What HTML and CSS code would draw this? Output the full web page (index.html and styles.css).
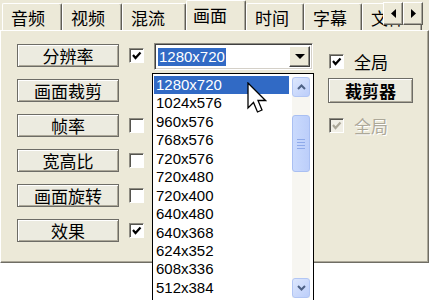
FILE: index.html
```html
<!DOCTYPE html>
<html lang="zh-CN">
<head>
    <meta charset="UTF-8">
    <title>画面设置</title>
    <link rel="stylesheet" href="styles.css">
</head>
<body>
    <div class="window">
        <!-- Tab strip -->
        <div class="tabstrip">
            <div class="tab">音频</div>
            <div class="tab">视频</div>
            <div class="tab tab-before-active">混流</div>
            <div class="tab active">画面</div>
            <div class="tab tab-after-active">时间</div>
            <div class="tab tab-after-active">字幕</div>
            <div class="tab">文件</div>
            <div class="tab-scroll">
                <div class="scroll-btn">
                    <svg width="5" height="9" viewBox="0 0 5 9"><path d="M5 0 L0 4.5 L5 9 Z" fill="#000"/></svg>
                </div>
                <div class="scroll-btn">
                    <svg width="5" height="9" viewBox="0 0 5 9"><path d="M0 0 L5 4.5 L0 9 Z" fill="#000"/></svg>
                </div>
            </div>
        </div>

        <!-- Video page -->
        <div class="panel">
            <div class="btn btn-left">分辨率</div>
            <div class="check checked col-check">
                <svg viewBox="0 0 11 11"><path d="M2 5 L4.5 8 L9.5 2.5" fill="none" stroke="#000" stroke-width="2.2"/></svg>
            </div>
            <div class="combo col-combo">
                <span class="combo-value">1280x720</span>
                <div class="combo-btn">
                    <svg width="10" height="5" viewBox="0 0 10 5"><path d="M0 0 L10 0 L5 5 Z" fill="#000"/></svg>
                </div>
                <div class="dropdown">
                    <div class="options">
                        <div class="option selected">1280x720</div>
                        <div class="option">1024x576</div>
                        <div class="option">960x576</div>
                        <div class="option">768x576</div>
                        <div class="option">720x576</div>
                        <div class="option">720x480</div>
                        <div class="option">720x400</div>
                        <div class="option">640x480</div>
                        <div class="option">640x368</div>
                        <div class="option">624x352</div>
                        <div class="option">608x336</div>
                        <div class="option">512x384</div>
                    </div>
                    <div class="scrollbar">
                        <div class="sb-btn">
                            <svg width="9" height="6" viewBox="0 0 9 6"><path d="M1 5 L4.5 1.5 L8 5" fill="none" stroke="#4d6185" stroke-width="2"/></svg>
                        </div>
                        <div class="sb-thumb">
                            <span></span><span></span><span></span><span></span>
                        </div>
                        <div class="sb-track"></div>
                        <div class="sb-btn">
                            <svg width="9" height="6" viewBox="0 0 9 6"><path d="M1 1 L4.5 4.5 L8 1" fill="none" stroke="#4d6185" stroke-width="2"/></svg>
                        </div>
                    </div>
                </div>
            </div>
            <label class="side-check col-side">
                <span class="check checked">
                    <svg viewBox="0 0 11 11"><path d="M2 5 L4.5 8 L9.5 2.5" fill="none" stroke="#000" stroke-width="2.2"/></svg>
                </span>
                全局
            </label>

            <div class="btn btn-left">画面裁剪</div>
            <div class="btn btn-crop col-side">裁剪器</div>

            <div class="btn btn-left">帧率</div>
            <div class="check col-check"></div>
            <label class="side-check disabled col-side">
                <span class="check checked">
                    <svg viewBox="0 0 11 11"><path d="M2 5 L4.5 8 L9.5 2.5" fill="none" stroke="#aca899" stroke-width="2.2"/></svg>
                </span>
                全局
            </label>

            <div class="btn btn-left">宽高比</div>
            <div class="check col-check"></div>

            <div class="btn btn-left">画面旋转</div>
            <div class="check col-check"></div>

            <div class="btn btn-left">效果</div>
            <div class="check checked col-check">
                <svg viewBox="0 0 11 11"><path d="M2 5 L4.5 8 L9.5 2.5" fill="none" stroke="#000" stroke-width="2.2"/></svg>
            </div>

            <!-- mouse pointer over the open list -->
            <svg class="cursor" width="20" height="32" viewBox="0 0 20 32">
                <path d="M1 1 L1 26 L6.5 20.5 L10.5 30 L15 28 L11 18.5 L18.5 18.5 Z" fill="#fff" stroke="#000" stroke-width="1.3" stroke-linejoin="miter"/>
            </svg>
        </div>
    </div>
</body>
</html>
```

FILE: styles.css
```css
* {
    margin: 0;
    padding: 0;
    box-sizing: border-box;
}

html, body {
    width: 429px;
    height: 300px;
    overflow: hidden;
}

body {
    background: #fff;
    font-family: "Noto Sans CJK SC", sans-serif;
    font-size: 17px;
    color: #000;
}

.window {
    width: 429px;
    background: #ece9d8;
}

/* Tabs */
.tabstrip {
    position: relative;
    height: 30px;
    display: flex;
    align-items: flex-end;
    padding-left: 2px;
    overflow: hidden;
}

.tab {
    flex: none;
    width: 60px;
    height: 27px;
    line-height: 27px;
    padding-left: 8px;
    border-top: 1px solid #fff;
    border-left: 1px solid #fff;
    border-right: 1px solid #5f5d55;
    box-shadow: inset -1px 0 #a9a79c;
    border-radius: 2px 2px 0 0;
    white-space: nowrap;
}

.tab-before-active {
    width: 64px;
}

.tab-after-active {
    width: 58px;
}

.tab.active {
    position: relative;
    z-index: 1;
    height: 31px;
    line-height: 27px;
    margin-bottom: -1px;
    padding-left: 6px;
    background: #ece9d8;
}

.tab-scroll {
    position: absolute;
    top: 2px;
    left: 383px;
    display: flex;
}

.scroll-btn {
    width: 20px;
    height: 23px;
    display: flex;
    align-items: center;
    justify-content: center;
    background: #ece9d8;
    border: 1px solid;
    border-color: #fff #5f5d55 #5f5d55 #fff;
    box-shadow: inset -1px -1px #a9a79c;
}

/* Page */
.panel {
    position: relative;
    height: 233px;
    padding: 12px 0 0 16px;
    border-top: 1px solid #fff;
    border-left: 1px solid #fff;
    border-right: 1px solid #6f6d64;
    border-bottom: 1px solid #6f6d64;
    box-shadow: inset -1px -1px #aca899;
    display: grid;
    grid-template-columns: 112px 25px 174px 85px;
    grid-auto-rows: 25px;
    row-gap: 10px;
    align-items: center;
}

.btn-left { grid-column: 1; }
.col-check { grid-column: 2; }
.col-combo { grid-column: 3; }
.col-side { grid-column: 4; }

.btn {
    height: 23px;
    line-height: 21px;
    text-align: center;
    background: #ecebe0;
    border: 1px solid #6d6c66;
    box-shadow: inset 1px 1px #fff, inset -1px -1px #aca899;
    white-space: nowrap;
}

.btn-left {
    width: 102px;
}

.btn-crop {
    width: 85px;
    height: 25px;
    line-height: 23px;
    font-weight: 700;
}

/* Checkboxes */
.check {
    width: 15px;
    height: 15px;
    background: #fff;
    border: 1px solid;
    border-color: #8e8c82 #fff #fff #8e8c82;
    box-shadow: inset 1px 1px #55544e;
    display: flex;
    align-items: center;
    justify-content: center;
}

.check svg {
    width: 11px;
    height: 11px;
}

.side-check {
    display: flex;
    align-items: center;
    gap: 10px;
    padding-left: 1px;
}

.panel > .side-check:first-of-type {
    align-self: start;
    margin-top: 6px;
}

.side-check.disabled {
    color: #aca899;
    text-shadow: 1px 1px #fff;
}

.side-check.disabled .check {
    background: #f1efe6;
}

/* Combo box */
.combo {
    position: relative;
    align-self: start;
    width: 159px;
    height: 27px;
    display: flex;
    align-items: center;
    padding: 0 2px 0 3px;
    background: #fff;
    border: 1px solid;
    border-color: #8e8c82 #fff #fff #8e8c82;
    box-shadow: inset 1px 1px #404040, inset -1px -1px #d4d0c8;
    font-family: "Liberation Sans", Arial, sans-serif;
    font-size: 15px;
}

.combo-value {
    height: 18px;
    line-height: 18px;
    padding: 0 1px;
    background: #316ac5;
    color: #fff;
}

.combo-btn {
    margin-left: auto;
    width: 21px;
    height: 21px;
    display: flex;
    align-items: center;
    justify-content: center;
    background: #ece9d8;
    border: 1px solid;
    border-color: #fff #404040 #404040 #fff;
    box-shadow: inset -1px -1px #8e8c82;
}

/* Open list (runs on past the bottom of the window) */
.dropdown {
    position: absolute;
    top: 29px;
    left: -3px;
    z-index: 2;
    width: 162px;
    height: 228px;
    display: flex;
    padding: 2px 3px 0 1px;
    background: #fff;
    border: 1px solid #000;
    border-bottom: none;
}

.options {
    flex: 1;
}

.option {
    height: 18.45px;
    line-height: 18.45px;
    padding-left: 2px;
}

.option.selected {
    background: #316ac5;
    color: #fff;
}

.scrollbar {
    width: 18px;
    height: 221px;
    margin: 1px 0 0 3px;
    display: flex;
    flex-direction: column;
    background: #f7f6f1;
}

.sb-btn {
    height: 20px;
    display: flex;
    align-items: center;
    justify-content: center;
    background: linear-gradient(135deg, #dde7fd, #bccefa);
    border: 1px solid #b2c6f4;
    border-radius: 3px;
}

.sb-thumb {
    height: 57px;
    margin-top: 18px;
    display: flex;
    flex-direction: column;
    align-items: center;
    justify-content: center;
    gap: 2px;
    background: linear-gradient(90deg, #cadafd, #bccefa);
    border: 1px solid #a9bff2;
    border-radius: 3px;
}

.sb-thumb span {
    width: 8px;
    height: 1px;
    background: #8faaea;
}

.sb-track {
    flex: 1;
}

.cursor {
    position: absolute;
    left: 246px;
    top: 51px;
    z-index: 3;
}
```
